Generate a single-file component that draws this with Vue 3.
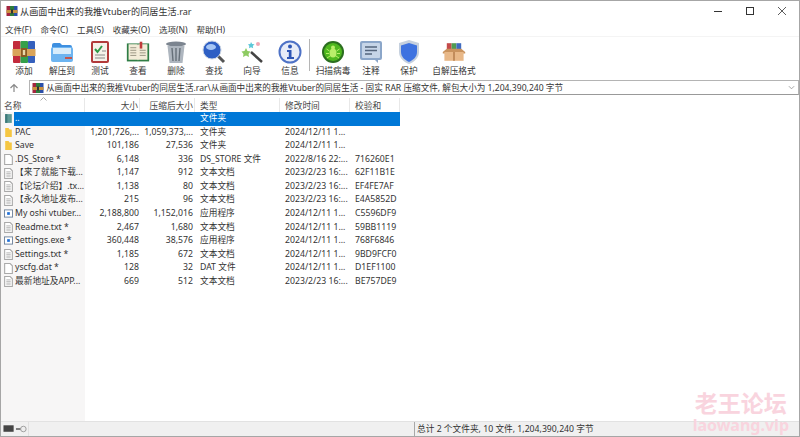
<script setup>
const menus = ['文件(F)', '命令(C)', '工具(S)', '收藏夹(O)', '选项(N)', '帮助(H)']

const headers = [
  { label: '名称', cls: 'left first' },
  { label: '大小', cls: 'right' },
  { label: '压缩后大小', cls: 'right' },
  { label: '类型', cls: 'left' },
  { label: '修改时间', cls: 'left' },
  { label: '校验和', cls: 'left' },
]

const files = [
  { name: '..', size: '', packed: '', type: '文件夹', time: '', crc: '', icon: 'up', selected: true },
  { name: 'PAC', size: '1,201,726,...', packed: '1,059,373,...', type: '文件夹', time: '2024/12/11 1...', crc: '', icon: 'folder' },
  { name: 'Save', size: '101,186', packed: '27,536', type: '文件夹', time: '2024/12/11 1...', crc: '', icon: 'folder' },
  { name: '.DS_Store *', size: '6,148', packed: '336', type: 'DS_STORE 文件', time: '2022/8/16 22:...', crc: '716260E1', icon: 'blank' },
  { name: '【来了就能下载...', size: '1,147', packed: '912', type: '文本文档', time: '2023/2/23 16:...', crc: '62F11B1E', icon: 'text' },
  { name: '【论坛介绍】.tx...', size: '1,138', packed: '80', type: '文本文档', time: '2023/2/23 16:...', crc: 'EF4FE7AF', icon: 'text' },
  { name: '【永久地址发布...', size: '215', packed: '96', type: '文本文档', time: '2023/2/23 16:...', crc: 'E4A5852D', icon: 'text' },
  { name: 'My oshi vtuber...', size: '2,188,800', packed: '1,152,016', type: '应用程序', time: '2024/12/11 1...', crc: 'C5596DF9', icon: 'exe' },
  { name: 'Readme.txt *', size: '2,467', packed: '1,680', type: '文本文档', time: '2024/12/11 1...', crc: '59BB1119', icon: 'text' },
  { name: 'Settings.exe *', size: '360,448', packed: '38,576', type: '应用程序', time: '2024/12/11 1...', crc: '768F6846', icon: 'exe' },
  { name: 'Settings.txt *', size: '1,185', packed: '672', type: '文本文档', time: '2024/12/11 1...', crc: '9BD9FCF0', icon: 'text' },
  { name: 'yscfg.dat *', size: '128', packed: '32', type: 'DAT 文件', time: '2024/12/11 1...', crc: 'D1EF1100', icon: 'blank' },
  { name: '最新地址及APP...', size: '669', packed: '512', type: '文本文档', time: '2023/2/23 16:...', crc: 'BE757DE9', icon: 'text' },
]
</script>

<template>
  <div class="window">
    <!-- 标题栏 -->
    <div class="titlebar">
      <svg class="rar-small" viewBox="0 0 24 24">
        <rect x="1" y="2" width="7" height="20" fill="#a3263f" />
        <rect x="8" y="2" width="8" height="20" fill="#2e7d3c" />
        <rect x="16" y="2" width="7" height="20" fill="#2b4fa8" />
        <rect x="1" y="10" width="22" height="6" fill="#c9913f" />
        <rect x="10" y="9" width="4" height="8" fill="#333" />
      </svg>
      <span class="title">从画面中出来的我推Vtuber的同居生活.rar</span>
      <div class="caption">
        <svg viewBox="0 0 10 10"><path d="M1 5.5H9" stroke="#333" fill="none" /></svg>
        <svg viewBox="0 0 10 10"><rect x="1.5" y="1.5" width="7" height="7" stroke="#333" fill="none" /></svg>
        <svg viewBox="0 0 10 10"><path d="M1 1L9 9M9 1L1 9" stroke="#333" stroke-width="0.8" fill="none" /></svg>
      </div>
    </div>

    <!-- 菜单 -->
    <div class="menubar">
      <span v-for="m in menus" :key="m">{{ m }}</span>
    </div>

    <!-- 工具栏 -->
    <div class="toolbar">
      <div class="tool">
        <svg viewBox="0 0 24 24">
          <rect x="1" y="1" width="7.5" height="22" rx="1" fill="#c22b3c" />
          <rect x="8.5" y="1" width="7.5" height="22" rx="1" fill="#34a04a" />
          <rect x="16" y="1" width="7" height="22" rx="1" fill="#3560bd" />
          <rect x="0.5" y="9" width="23" height="7" fill="#d9a45a" />
          <rect x="9" y="8" width="6" height="9" fill="#8a5a24" />
          <rect x="10.8" y="10" width="2.4" height="5" fill="#e9d8a8" />
        </svg>
        <span>添加</span>
      </div>
      <div class="tool">
        <svg viewBox="0 0 24 24">
          <path d="M2 5a2 2 0 0 1 2-2h6l2 2h8a2 2 0 0 1 2 2v3H2z" fill="#3d8fe0" />
          <rect x="1" y="7" width="22" height="15" rx="2" fill="#6db4f0" />
          <rect x="3" y="8" width="18" height="6" fill="#d7ecfb" />
          <rect x="15" y="17" width="7" height="2" fill="#c2574f" />
        </svg>
        <span>解压到</span>
      </div>
      <div class="tool">
        <svg viewBox="0 0 24 24">
          <rect x="3" y="1" width="18" height="22" rx="2" fill="#b23b3b" />
          <rect x="5" y="3" width="14" height="18" fill="#f5f2ea" />
          <path d="M7 9l2.500 3L14 6" stroke="#2f9a48" stroke-width="2" fill="none" />
          <path d="M7 15h10M7 18h10M14 11h4" stroke="#8a8a8a" stroke-width="1" fill="none" />
        </svg>
        <span>测试</span>
      </div>
      <div class="tool">
        <svg viewBox="0 0 28 24">
          <rect x="1" y="2" width="26" height="21" fill="#2f7d45" />
          <path d="M3 3h10.500l0.500 1 0.500-1H25v18H14.500l-0.500 1-0.500-1H3z" fill="#f3ecd8" />
          <rect x="16" y="0" width="3" height="8" fill="#c03a3a" />
          <path d="M5 7h7M5 10h7M5 13h7M5 16h7M16 10h7M16 13h7M16 16h7" stroke="#8f8a78" fill="none" />
        </svg>
        <span>查看</span>
      </div>
      <div class="tool">
        <svg viewBox="0 0 24 24">
          <ellipse cx="12" cy="4" rx="10" ry="2.500" fill="#7c8590" />
          <path d="M3.500 6h17l-2 17h-13z" fill="#aeb6bf" />
          <path d="M8 8l1 13M12 8v13M16 8l-1 13" stroke="#667079" stroke-width="1.400" fill="none" />
        </svg>
        <span>删除</span>
      </div>
      <div class="tool">
        <svg viewBox="0 0 24 24">
          <path d="M15 15l7 7" stroke="#555" stroke-width="3" fill="none" />
          <circle cx="10" cy="10" r="9" fill="#2e5fc4" stroke="#c9d3e2" />
          <ellipse cx="9" cy="7" rx="5" ry="3" fill="#a6c6f5" />
        </svg>
        <span>查找</span>
      </div>
      <div class="tool">
        <svg viewBox="0 0 24 24">
          <path d="M11 12l11 10" stroke="#444" stroke-width="2.500" fill="none" />
          <path d="M6 8l1.500 3 3 .5-2 2.500.5 3-3-1.500-3 1.500.5-3-2-2.500 3-.5z" fill="#8ecb62" />
          <path d="M11 2l1.200 2 2.300.3-1.700 1.600.4 2.300-2.200-1-2 1 .3-2.300L8 4.300l2.300-.3z" fill="#5cc8d8" />
          <circle cx="18" cy="4" r="2" fill="#f0a8b4" />
        </svg>
        <span>向导</span>
      </div>
      <div class="tool">
        <svg viewBox="0 0 24 24">
          <circle cx="12" cy="12" r="10.500" fill="#e7ecf8" stroke="#4e72c6" stroke-width="2" />
          <circle cx="12" cy="6.500" r="2" fill="#2d55b5" />
          <path d="M9 10h4.500v7H16v2H9v-2h1.800v-5H9z" fill="#2d55b5" />
        </svg>
        <span>信息</span>
      </div>
      <div class="sep"></div>
      <div class="tool">
        <svg viewBox="0 0 24 24">
          <circle cx="12" cy="12" r="11" fill="#2b6e1f" />
          <circle cx="12" cy="12" r="9" fill="#4fb81f" />
          <ellipse cx="12" cy="13" rx="3.500" ry="4.500" fill="#b9ee6a" />
          <circle cx="12" cy="7.500" r="2" fill="#b9ee6a" />
          <path d="M5.500 9l3 2M18.500 9l-3 2M5 13.500h3M19 13.500h-3M6 18l3-2M18 18l-3-2" stroke="#b9ee6a" fill="none" />
        </svg>
        <span>扫描病毒</span>
      </div>
      <div class="tool">
        <svg viewBox="0 0 24 24">
          <path d="M3 1h18a2 2 0 0 1 2 2v15a2 2 0 0 1-2 2h-2v3l-3-3H3a2 2 0 0 1-2-2V3a2 2 0 0 1 2-2z" fill="#8ba6c9" />
          <rect x="3" y="3" width="18" height="15" rx="1" fill="#c6d5e8" />
          <path d="M6 7h12M6 10.500h12M6 14h7" stroke="#54657c" stroke-width="1.300" fill="none" />
        </svg>
        <span>注释</span>
      </div>
      <div class="tool">
        <svg viewBox="0 0 24 24">
          <path d="M12 0l10 3v9c0 6-5 10-10 12C7 22 2 18 2 12V3z" fill="#c5d0de" />
          <path d="M12 3l8 2.500V12c0 5-4 8-8 10-4-2-8-5-8-10V5.500z" fill="#3d72e0" />
        </svg>
        <span>保护</span>
      </div>
      <div class="tool wide">
        <svg viewBox="0 0 30 24">
          <rect x="6" y="1" width="6" height="9" fill="#c44a4a" />
          <rect x="12" y="1" width="6" height="9" fill="#4f9c52" />
          <rect x="18" y="1" width="6" height="9" fill="#3f6bc0" />
          <path d="M1 12l5-4h18l5 4v2H1z" fill="#c9935e" />
          <rect x="3" y="12" width="24" height="11" fill="#e8b888" />
          <rect x="14" y="12" width="2" height="11" fill="#b98250" />
        </svg>
        <span>自解压格式</span>
      </div>
    </div>

    <!-- 地址栏 -->
    <div class="addressbar">
      <svg class="uparrow" viewBox="0 0 10 10"><path d="M5 9V1.500M1.500 5L5 1.500 8.500 5" stroke="#888" stroke-width="1.200" fill="none" /></svg>
      <div class="address">
        <svg class="rar-small" viewBox="0 0 24 24">
          <rect x="1" y="2" width="7" height="20" fill="#a3263f" />
          <rect x="8" y="2" width="8" height="20" fill="#2e7d3c" />
          <rect x="16" y="2" width="7" height="20" fill="#2b4fa8" />
          <rect x="1" y="10" width="22" height="6" fill="#c9913f" />
          <rect x="10" y="9" width="4" height="8" fill="#333" />
        </svg>
        <span class="path">从画面中出来的我推Vtuber的同居生活.rar\从画面中出来的我推Vtuber的同居生活 - 固实 RAR 压缩文件, 解包大小为 1,204,390,240 字节</span>
        <svg class="chev" viewBox="0 0 8 5"><path d="M1 1l3 3 3-3" stroke="#999" fill="none" /></svg>
      </div>
    </div>

    <!-- 列表 -->
    <div class="list-head">
      <div v-for="h in headers" :key="h.label" class="hcell" :class="h.cls">{{ h.label }}</div>
      <svg class="sort" viewBox="0 0 7 4"><path d="M0.500 3.500L3.500 0.500 6.500 3.500" stroke="#aaa" fill="none" /></svg>
    </div>
    <div class="list">
      <div v-for="f in files" :key="f.name" class="row" :class="{ selected: f.selected }">
        <div class="namecell">
          <span class="ficon">
            <svg v-if="f.icon === 'folder'" viewBox="0 0 8 10"><path d="M1 1h3l1 1.200h2V9H1z" fill="#f5c642" /></svg>
            <svg v-else-if="f.icon === 'up'" viewBox="0 0 8 10"><path d="M1 1h6v8H1z" fill="#5f9a96" /><path d="M1 1h2v8H1z" fill="#3d7a7a" /></svg>
            <svg v-else-if="f.icon === 'exe'" viewBox="0 0 10 10"><rect x="0.500" y="1" width="9" height="8" fill="#fff" stroke="#6b7f99" /><rect x="3.500" y="3.500" width="3" height="3" fill="#1f6fd6" /></svg>
            <svg v-else viewBox="0 0 8 10">
              <path d="M0.500 0.500h5l2 2v7h-7z" fill="#fff" stroke="#a9a9a9" />
              <path v-if="f.icon === 'text'" d="M2 3.500h4M2 5h4M2 6.500h4M2 8h4" stroke="#c4c4c4" fill="none" />
            </svg>
          </span>
          <span class="nm">{{ f.name }}</span>
        </div>
        <div class="cell right">{{ f.size }}</div>
        <div class="cell right packed">{{ f.packed }}</div>
        <div class="cell">{{ f.type }}</div>
        <div class="cell">{{ f.time }}</div>
        <div class="cell">{{ f.crc }}</div>
      </div>
    </div>

    <!-- 状态栏 -->
    <div class="statusbar">
      <div class="st-icons">
        <svg viewBox="0 0 27 10">
          <rect x="0.500" y="1" width="11" height="7" fill="#444" />
          <path d="M14 5h7" stroke="#777" stroke-width="2" fill="none" />
          <circle cx="22" cy="5" r="3" fill="#eee" stroke="#999" />
        </svg>
      </div>
      <div class="st-left"></div>
      <div class="st-right">总计 2 个文件夹, 10 文件, 1,204,390,240 字节</div>
    </div>

    <div class="watermark">
      <div class="wm-cn">老王论坛</div>
      <div class="wm-en">laowang.vip</div>
    </div>
  </div>
</template>

<style>
html, body {
  margin: 0;
  overflow: hidden;
}
</style>

<style scoped>
.window {
  position: relative;
  box-sizing: border-box;
  width: 800px;
  height: 437px;
  display: flex;
  flex-direction: column;
  background: #fff;
  border: 1px solid #a6a6a6;
  font-family: "Noto Sans", "Noto Sans CJK SC", sans-serif;
  font-size: 8.7px;
  color: #333;
  overflow: hidden;
}

/* 标题栏 */
.titlebar {
  display: flex;
  align-items: center;
  height: 20px;
  padding-left: 5px;
  flex: none;
}
.rar-small {
  width: 12px;
  height: 12px;
  flex: none;
}
.title {
  margin-left: 2px;
  font-size: 9.15px;
}
.caption {
  margin-left: auto;
  display: flex;
  gap: 22px;
  padding-right: 12px;
}
.caption svg {
  width: 10px;
  height: 10px;
}

/* 菜单 */
.menubar {
  display: flex;
  gap: 9px;
  height: 15px;
  align-items: center;
  padding-left: 4px;
  flex: none;
  font-size: 8.5px;
  border-bottom: 1px solid #f4f4f4;
}

/* 工具栏 */
.toolbar {
  display: flex;
  height: 42px;
  padding-left: 4px;
  flex: none;
}
.tool {
  width: 38px;
  display: flex;
  flex-direction: column;
  align-items: center;
  padding-top: 3px;
  box-sizing: border-box;
}
.tool.wide {
  width: 52px;
}
.tool svg {
  width: 24px;
  height: 24px;
}
.tool span {
  margin-top: 1px;
  line-height: 12px;
  white-space: nowrap;
}
.sep {
  width: 1px;
  height: 32px;
  margin: 2px 4px 0 0;
  background: #b5b5b5;
}

/* 地址栏 */
.addressbar {
  display: flex;
  align-items: center;
  height: 17px;
  flex: none;
}
.uparrow {
  width: 10px;
  height: 10px;
  margin: 0 10px 0 8px;
}
.address {
  flex: 1;
  height: 15px;
  box-sizing: border-box;
  display: flex;
  align-items: center;
  padding-left: 2px;
  padding-right: 3px;
  border: 1px solid #b4b4b4;
  border-bottom-color: #999;
}
.path {
  margin-left: 2px;
  font-size: 8.6px;
  white-space: nowrap;
}
.chev {
  width: 7px;
  height: 5px;
  margin-left: auto;
}

/* 列表 */
.list-head,
.row {
  display: grid;
  grid-template-columns: 84px 55px 55px 85px 70px 50px;
}
.list-head {
  position: relative;
  height: 14px;
  margin-top: 2px;
  flex: none;
  color: #444;
}
.hcell {
  display: flex;
  align-items: center;
  padding: 0 5px;
  border-right: 1px solid #e8e8e8;
  box-sizing: border-box;
  white-space: nowrap;
}
.hcell.first {
  padding-left: 3px;
}
.hcell.right {
  justify-content: flex-end;
  padding-right: 1px;
}
.sort {
  position: absolute;
  left: 39px;
  top: -1px;
  width: 7px;
  height: 4px;
}
.list {
  flex: 1;
  background: linear-gradient(90deg, #f7f6f6 84px, #fff 84px);
}
.row {
  height: 13.58px;
  line-height: 13.58px;
  width: 399px;
}
.namecell {
  display: flex;
  min-width: 0;
}
.ficon {
  width: 13px;
  flex: none;
  display: flex;
  align-items: center;
  padding-left: 3px;
  box-sizing: border-box;
}
.ficon svg {
  width: 9px;
  height: 11px;
}
.nm {
  flex: 1;
  padding-left: 1px;
  white-space: nowrap;
  overflow: hidden;
}
.cell {
  padding-left: 5px;
  white-space: nowrap;
  overflow: hidden;
}
.cell.right {
  padding-left: 0;
  padding-right: 1px;
  text-align: right;
}
.cell.packed {
  padding-right: 2px;
}
.row.selected .nm,
.row.selected .cell {
  background: #0078d7;
  color: #fff;
}

/* 状态栏 */
.statusbar {
  display: flex;
  height: 15px;
  flex: none;
  background: #f0f0f0;
  border-top: 1px solid #e2e2e2;
  box-sizing: border-box;
  line-height: 14px;
}
.st-icons {
  width: 28px;
  padding-left: 2px;
  box-sizing: border-box;
  border-right: 1px solid #e0e0e0;
  display: flex;
  align-items: center;
}
.st-icons svg {
  width: 26px;
  height: 10px;
}
.st-left {
  width: 385px;
  border-right: 1px solid #a8a8a8;
}
.st-right {
  padding-left: 2px;
  white-space: nowrap;
}

/* 水印 */
.watermark {
  position: absolute;
  right: 10px;
  bottom: 2px;
  text-align: center;
  color: #f9d4de;
  font-family: "Noto Sans CJK SC", sans-serif;
  font-weight: 700;
  pointer-events: none;
}
.wm-cn {
  font-size: 23px;
  line-height: 29px;
}
.wm-en {
  font-size: 16px;
  line-height: 17px;
  font-family: "Noto Sans", sans-serif;
}
</style>
